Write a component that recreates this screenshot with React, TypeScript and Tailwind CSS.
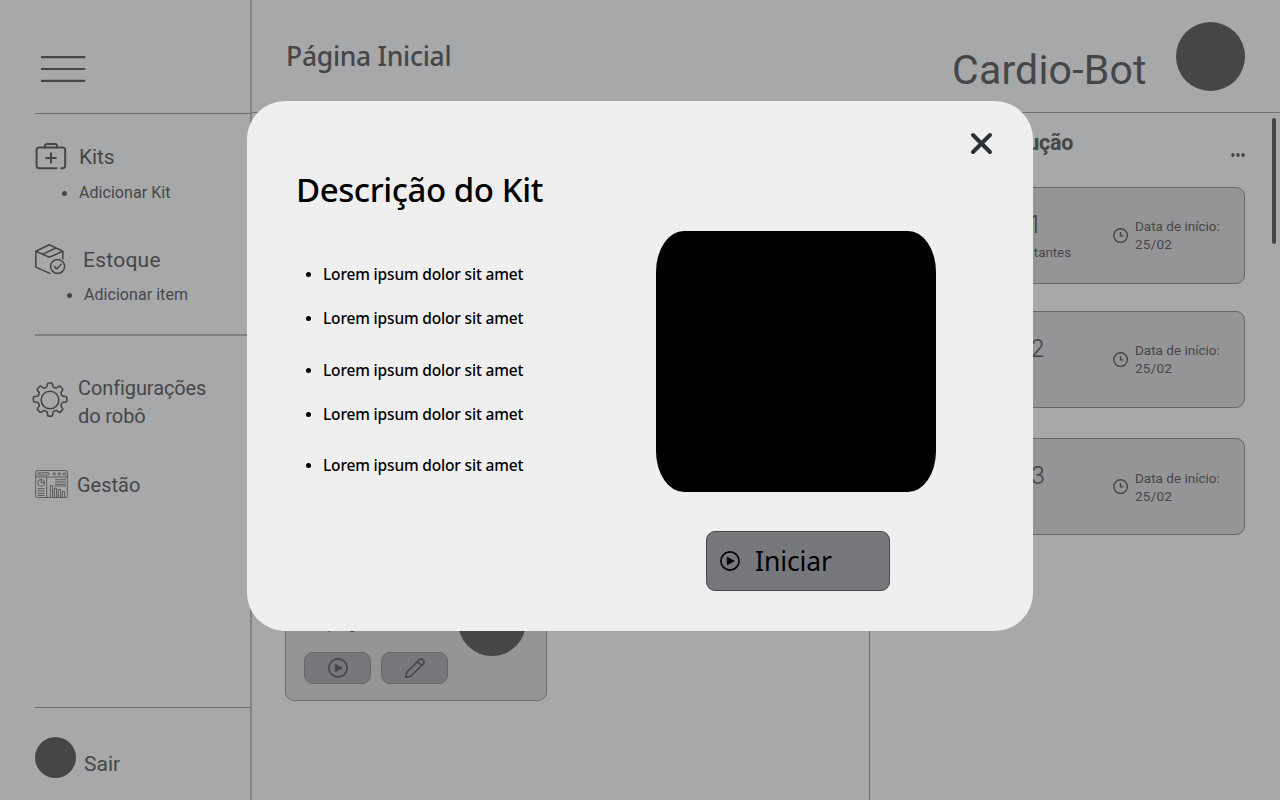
import type { ReactNode } from "react";

function PlayIcon({ className }: { className: string }) {
  return (
    <svg viewBox="0 0 20 20" className={className} fill="none">
      <circle cx="10" cy="10" r="9.1" stroke="currentColor" strokeWidth="1.6" />
      <path d="M7.2 6.1v7.8L14.4 10z" fill="currentColor" stroke="currentColor" strokeWidth="0.5" strokeLinejoin="round" />
    </svg>
  );
}

function KitIcon() {
  return (
    <svg viewBox="0 0 32 28" className="h-7 w-8" fill="none" stroke="currentColor" strokeWidth="2" strokeLinecap="round" strokeLinejoin="round">
      <path d="M21.500 25.200H4a2.400 2.400 0 0 1-2.400-2.400V6.800A2.400 2.400 0 0 1 4 4.400h23.800a2.400 2.400 0 0 1 2.400 2.400v16a2.400 2.400 0 0 1-2.400 2.400h-1.700" />
      <path d="M10 4.400V2.900a1.900 1.900 0 0 1 1.900-1.900h8.200a1.900 1.900 0 0 1 1.900 1.900v1.500M16 10.200v9.600M11.200 15h9.600" />
    </svg>
  );
}

function BoxIcon() {
  return (
    <svg viewBox="0 0 32 32" className="size-8" fill="none" stroke="currentColor" strokeWidth="1.5" strokeLinecap="round" strokeLinejoin="round">
      <path d="M.8 7.200 14.300.8 27.900 7.200v7.500M.8 7.200v15.900l14 6.300M.8 7.200l13.500 6L27.900 7.200M8 10.100 21 4" />
      <circle cx="22.600" cy="22.400" r="7" />
      <path d="m19.300 22.500 2.400 2.400 4.400-4.700" />
    </svg>
  );
}

function GearIcon() {
  return (
    <svg viewBox="0 0 36 36" className="size-9" fill="none" stroke="currentColor" strokeWidth="1.600" strokeLinejoin="round">
      <circle cx="18" cy="18" r="8.800" />
      <path d="M16.600 1h2.800q1 0 1.100 1l.3 2q.1 1 1.100 1.400l1.300.5q1 .4 1.800-.2l1.700-1.300q.8-.6 1.500.1l2.200 2.200q.7.700.1 1.500L29.300 10q-.6.800-.2 1.700l.6 1.400q.4 1 1.400 1.100l2.700.3q1 .1 1 1.100v3.300q0 1-1 1.100l-2.700.3q-1 .1-1.400 1.100l-.6 1.400q-.4 1 .2 1.800l1.300 1.800q.6.800-.1 1.500l-2.200 2.200q-.7.700-1.500.1l-1.700-1.300q-.8-.6-1.800-.2l-1.300.5q-1 .4-1.100 1.400l-.3 2.500q-.1 1-1.100 1h-2.800q-1 0-1.100-1l-.3-2.500q-.1-1-1.100-1.400l-1.300-.5q-1-.4-1.800.2l-1.700 1.300q-.8.600-1.500-.1l-2.200-2.200q-.7-.7-.1-1.500l1.300-1.800q.6-.8.200-1.800l-.6-1.400q-.4-1-1.400-1.100l-2.700-.3q-1-.1-1-1.100v-3.300q0-1 1-1.100l2.700-.3q1-.1 1.400-1.100l.6-1.400q.4-1-.2-1.700L5.400 8.200q-.6-.8.100-1.500l2.200-2.200q.7-.7 1.500-.1l1.700 1.300q.8.600 1.800.2l1.300-.5q1-.4 1.100-1.400l.3-2q.1-1 1.100-1z" />
    </svg>
  );
}

function DashboardIcon() {
  return (
    <svg viewBox="0 0 33 28" className="h-7 w-[33px]" fill="none" stroke="currentColor" strokeWidth="0.800">
      <rect x="0.700" y="0.600" width="31.600" height="27" rx="1.500" />
      <path d="M.7 7h31.600M11.700 7v20.500" />
      <rect x="3" y="2.800" width="11" height="2.200" rx="0.500" />
      <circle cx="19.300" cy="3.900" r="1.200" />
      <circle cx="24.300" cy="3.900" r="1.200" />
      <circle cx="29.300" cy="3.900" r="1.200" />
      <circle cx="6.200" cy="12.800" r="3.400" />
      <path d="M6.200 9.400v3.400h3.400M2.700 18.700h7M2.700 21h7M2.700 23.300h7M2.700 25.500h7M20 9.700h10.800M20 12h10.800M20 14.300h10.800M20 16h10.800" />
      <path d="M15.300 27.500V15.700h2.300v11.800M19.300 27.500v-9.200h2.300v9.200M23.300 27.500v-8h2.300v8M27.300 27.500v-6h2.300v6" />
    </svg>
  );
}

function PencilIcon() {
  return (
    <svg viewBox="0 0 20 20" className="size-5" fill="none" stroke="currentColor" strokeWidth="1.500" strokeLinejoin="round">
      <path d="m.8 19.200.9-4.900L14.400 1.600a2.400 2.400 0 0 1 3.400 0l.6.6a2.400 2.400 0 0 1 0 3.400L5.700 18.300zM12.500 3.500l4 4" />
    </svg>
  );
}

function ClockIcon() {
  return (
    <svg viewBox="0 0 16 16" className="size-4" fill="none" stroke="currentColor" strokeWidth="1.400">
      <circle cx="7.600" cy="7.600" r="6.800" />
      <path d="M7.500 4v3.900h3" />
    </svg>
  );
}

function SubItem({ className, children }: { className: string; children: ReactNode }) {
  return (
    <div className={"flex h-5 items-center gap-3 text-[16px] leading-5 " + className}>
      <span className="size-[5px] rounded-full bg-current" />
      <span className="tracking-[0.05px]">{children}</span>
    </div>
  );
}

function Sidebar() {
  return (
    <aside className="flex w-[252px] shrink-0 flex-col border-r-2 border-[#838385]">
      <div className="ml-[35px] flex h-[114px] items-start border-b border-[#6a6a6c] pt-[55px] pl-[6px]">
        <svg viewBox="0 0 45 28" className="h-7 w-[45px]" stroke="currentColor" strokeWidth="2.200">
          <path d="M0 2.100h44.200M0 14h44.200M0 25.900h44.200" />
        </svg>
      </div>

      <div className="mt-[28px] ml-[35px] flex h-[30px] items-center gap-[12px] text-[21px] leading-7">
        <KitIcon />
        <span className="tracking-[-0.1px]">Kits</span>
      </div>
      <SubItem className="mt-[12px] ml-[62px]">Adicionar Kit</SubItem>

      <div className="mt-[41px] ml-[35px] flex h-8 items-center gap-[16px] text-[21px] leading-8">
        <BoxIcon />
        <span className="tracking-[0.25px]">Estoque</span>
      </div>
      <SubItem className="mt-[9px] ml-[67px]">Adicionar item</SubItem>
      <div className="mt-[29px] ml-[35px] h-[2px] bg-[#808082]" />

      <div className="mt-[38px] ml-[32px] flex h-14 items-center gap-[10px] text-[20px] leading-7">
        <div className="-mt-[5px]"><GearIcon /></div>
        <div className="tracking-[-0.1px]">Configurações<br />do robô</div>
      </div>

      <div className="mt-[40px] ml-[35px] flex h-7 items-center gap-[9px] text-[20px] leading-7">
        <DashboardIcon />
        <span className="pt-[2px]">Gestão</span>
      </div>

      <div className="mt-[209px] ml-[35px] flex h-[93px] items-start border-t border-[#6a6a6c] pt-[29px] text-[21px]">
        <div className="size-[41px] rounded-full bg-[#464648]" />
        <span className="mt-[13px] ml-[8px] leading-7">Sair</span>
      </div>
    </aside>
  );
}

function KitCard() {
  return (
    <div className="h-[180px] w-[262px] rounded-[9px] border border-[#6f6f71] bg-[#959597] px-[18px] pt-[66px]">
      <div className="flex h-[64px] items-end justify-between">
        <span className="pb-[18px] text-[14px] leading-5">Em progresso</span>
        <div className="mr-[2px] mb-[-4px] size-[68px] rounded-full bg-[#464648]" />
      </div>
      <div className="flex gap-[10px]">
        <div className="flex h-8 w-[67px] items-center justify-center rounded-[9px] border border-[#656568] bg-[#77787c]">
          <PlayIcon className="size-5" />
        </div>
        <div className="flex h-8 w-[67px] items-center justify-center rounded-[9px] border border-[#656568] bg-[#77787c]">
          <PencilIcon />
        </div>
      </div>
    </div>
  );
}

type Run = { name: string; note: string; mt: string; titlePad: string; datePad: string };

const runs: Run[] = [
  { name: "Kit 1", note: "2 itens restantes", mt: "mt-[20px]", titlePad: "pr-[33px]", datePad: "pt-0" },
  { name: "Kit 2", note: "", mt: "mt-[27px]", titlePad: "pr-[27px]", datePad: "pt-0" },
  { name: "Kit 3", note: "", mt: "mt-[30px]", titlePad: "pr-[27px]", datePad: "pt-px" },
];

function RunCard({ run }: { run: Run }) {
  return (
    <div className={"flex h-[97px] w-[340px] rounded-[9px] border border-[#67676a] bg-[#959597] " + run.mt}>
      <div className="w-[166px] pt-[23px]">
        <div className={"text-right font-['Inter'] text-[24px] leading-7 font-light " + run.titlePad}>{run.name}</div>
        <div className="pr-px text-right text-[13.300px] leading-[27px]">{run.note}</div>
      </div>
      <div className="ml-[41px] flex pt-[29px]">
        <div className="pt-[11px]"><ClockIcon /></div>
        <div className={"ml-[6px] text-[13.500px] leading-[18px] " + run.datePad}>
          Data de início:
          <div className="tracking-[0.25px]">25/02</div>
        </div>
      </div>
    </div>
  );
}

function KitDialog() {
  const lines = ["pt-0", "pt-[24px]", "pt-[32px]", "pt-[24px]", "pt-[31px]"];
  return (
    <div role="dialog" className="absolute top-[101px] left-[247px] h-[529.500px] w-[786px] rounded-[38px] bg-[#efefef] text-black">
      <div className="flex h-[130px]">
        <h2 className="mt-[69px] ml-[49px] w-[600px] font-['Noto_Sans'] text-[33px] leading-10 font-medium tracking-[-0.42px]">Descrição do Kit</h2>
        <button aria-label="Fechar" className="mt-[31px] ml-[74px] size-[23px] text-[#2b3135]">
          <svg viewBox="0 0 23 23" className="size-[23px]" stroke="currentColor" strokeWidth="4" strokeLinecap="round">
            <path d="m3 3 17 17M20 3 3 20" />
          </svg>
        </button>
      </div>
      <div className="flex">
        <ul className="w-[409px] pt-[33px] pl-[59px]">
          {lines.map((pad, i) => (
            <li key={i} className={pad}>
              <div className="flex h-5 items-center gap-3 font-['Noto_Sans'] text-[15.500px] leading-5 font-medium tracking-[-0.17px]">
                <span className="size-[5px] rounded-full bg-black" />
                <span>Lorem ipsum dolor sit amet</span>
              </div>
            </li>
          ))}
        </ul>
        <div className="w-[280px]">
          <div className="h-[261px] rounded-[28px/41px] bg-black" />
          <button className="mt-[38.500px] ml-[50px] flex h-[60px] w-[184px] items-center rounded-[9px] border border-[#48484a] bg-[#77787c] pl-[13px]">
            <PlayIcon className="size-5" />
            <span className="ml-[15px] font-['Noto_Sans'] text-[26.500px] leading-8 tracking-[-0.1px]">Iniciar</span>
          </button>
        </div>
      </div>
    </div>
  );
}

export default function App() {
  return (
    <div className="relative flex h-[800px] w-[1280px] overflow-hidden bg-[#a7a8aa] font-['Roboto',sans-serif] text-[#464648]">
      <Sidebar />
      <div className="flex min-w-0 flex-1 flex-col">
        <header className="flex h-[113px] shrink-0 border-b border-[#6f6f71]">
          <h1 className="mt-[40px] ml-[34px] w-[666px] font-['Noto_Sans'] text-[26.500px] leading-8 font-medium tracking-[-0.28px]">Página Inicial</h1>
          <span className="mt-[46px] w-[224px] text-[41px] leading-[48px] tracking-[0.2px]">Cardio-Bot</span>
          <div className="mt-[21.500px] size-[69px] rounded-full bg-[#464648]" />
        </header>
        <div className="flex flex-1">
          <main className="w-[618px] border-r border-[#6a6a6c] pt-[408px] pl-[33px]">
            <KitCard />
          </main>
          <section className="w-[375px] pt-[17px] pl-[35px]">
            <div className="flex h-[37px] w-[340px] justify-between">
              <h2 className="w-[168px] text-right text-[21.500px] leading-[26px] font-bold tracking-[-0.3px]">Em execução</h2>
              <svg viewBox="0 0 14 6" className="mt-[22px] h-[6px] w-[14px]" fill="currentColor">
                <ellipse cx="1.900" cy="3" rx="1.700" ry="2.100" /><ellipse cx="7" cy="3" rx="1.700" ry="2.100" /><ellipse cx="12.100" cy="3" rx="1.700" ry="2.100" />
              </svg>
            </div>
            {runs.map((run) => <RunCard key={run.name} run={run} />)}
          </section>
          <div className="mt-[5px] ml-[27px] h-[126px] w-[4px] shrink-0 rounded-full bg-[#464648]" />
        </div>
      </div>
      <KitDialog />
    </div>
  );
}
